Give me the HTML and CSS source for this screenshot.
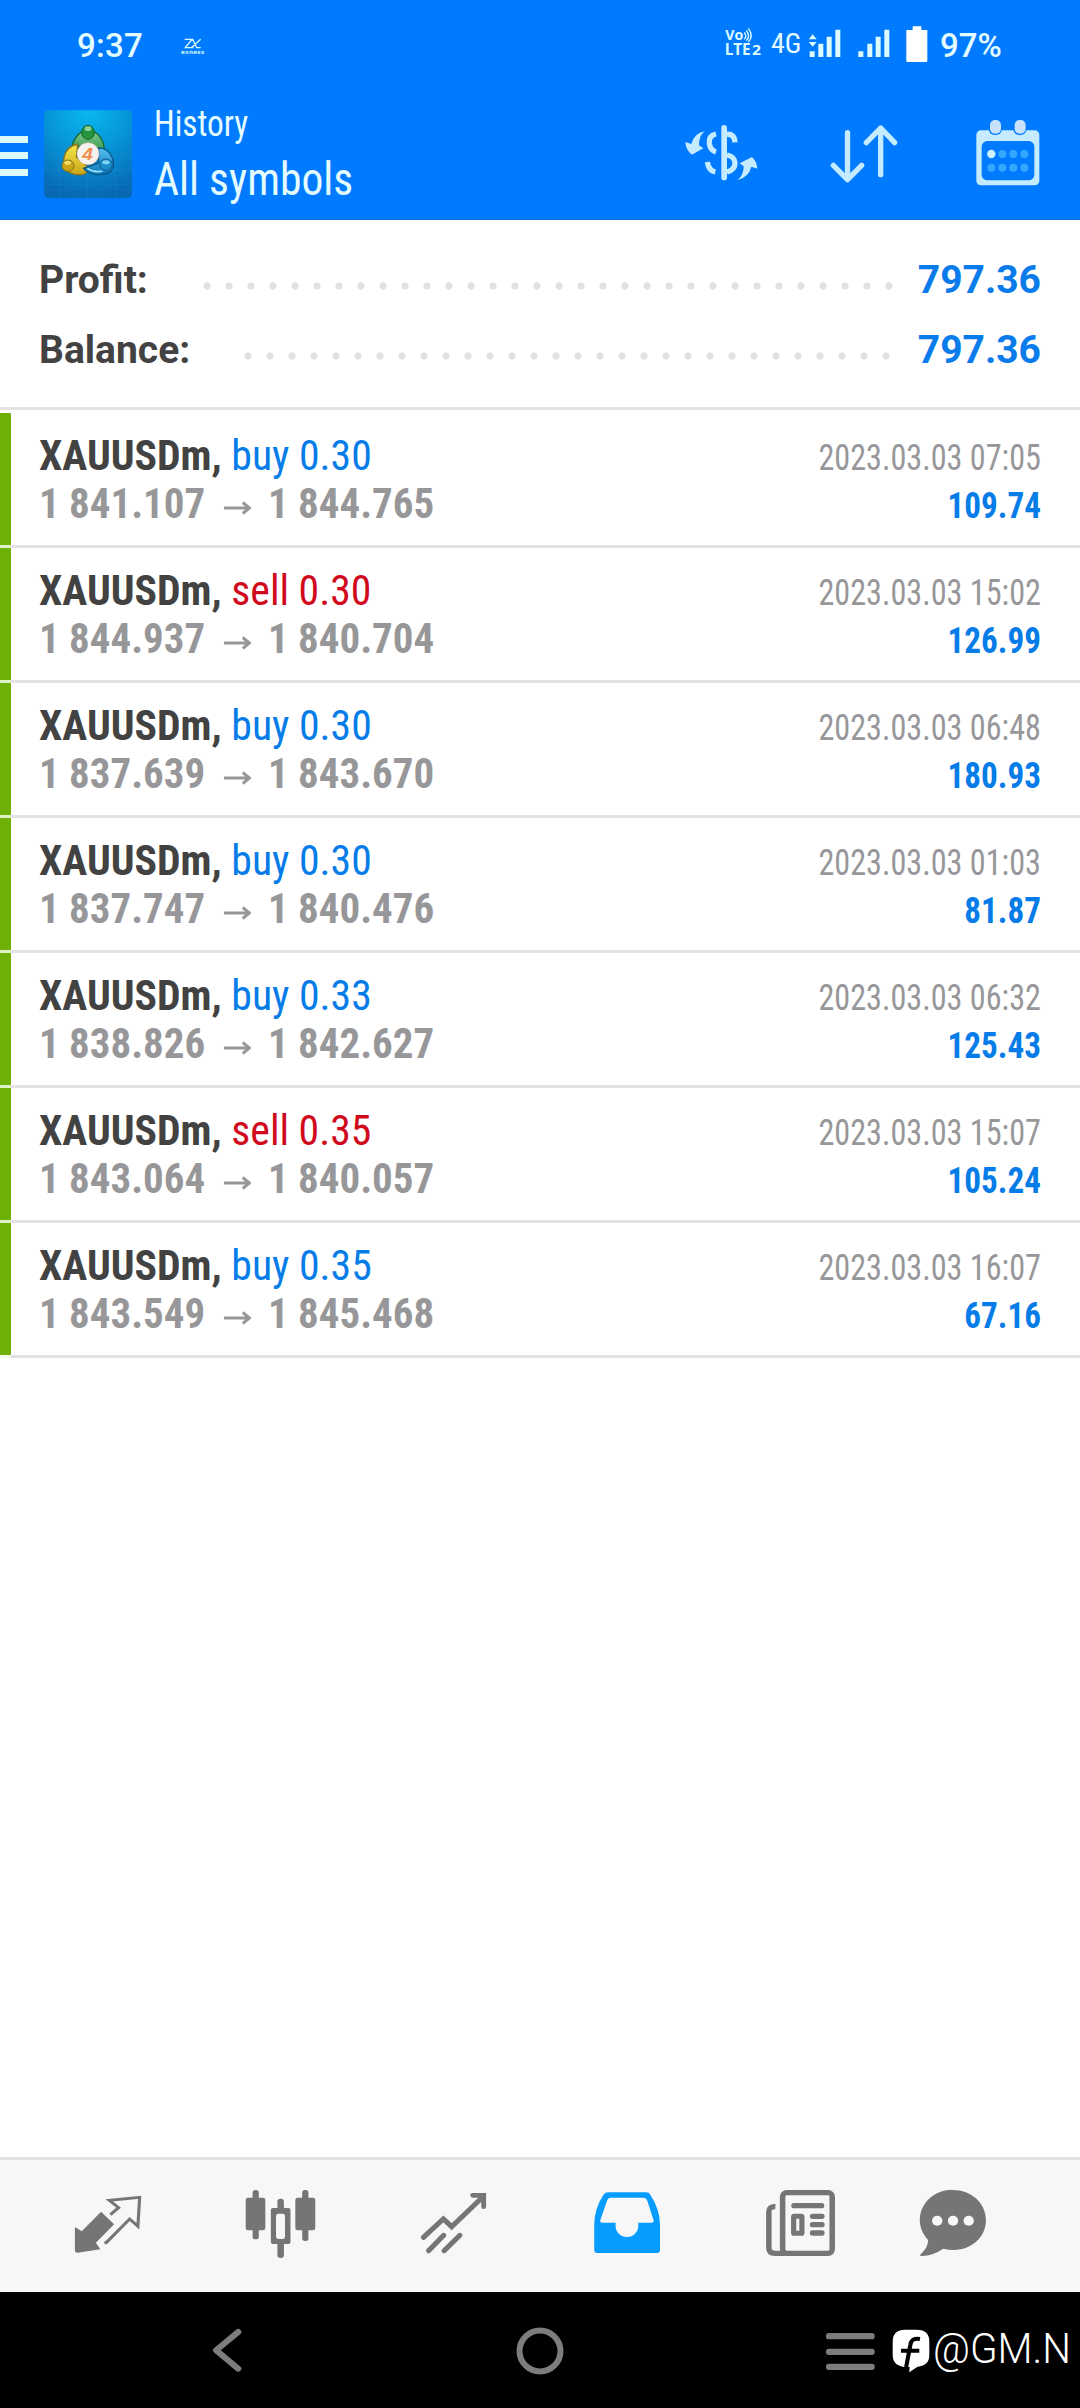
FILE: index.html
```html
<!DOCTYPE html>
<html lang="en">
<head>
<meta charset="utf-8">
<title>History</title>
<link rel="stylesheet" href="styles.css">
</head>
<body>
<div class="screen">
  <header class="top">
    <div class="status">
      <span class="clock">9:37</span>
      <svg class="exness" width="26" height="20" viewBox="0 0 78 60"><path d="M14 13h22L16 38h24M34 38L62 13M38 13l12 25h12" fill="none" stroke="#d8fbff" stroke-width="4"/><text class="tiny" x="3" y="57" textLength="70">exness</text></svg>
      <svg class="volte" width="40" height="34" viewBox="0 0 120 102"><text class="vo" x="4" y="42" textLength="54" lengthAdjust="spacingAndGlyphs">Vo</text><path d="M61 19q9 12 0 21M67 13q13 17 0 31M73 7q17 22 0 41" fill="none" stroke="#dcfbff" stroke-width="4"/><text class="vo lte" x="2" y="87" textLength="78" lengthAdjust="spacingAndGlyphs">LTE</text><text class="vo two" x="84" y="87" textLength="27" lengthAdjust="spacingAndGlyphs">2</text></svg>
      <span class="net cond">4G</span>
      <svg class="sig" width="84" height="32" viewBox="446 85 252 96" fill="#dcfbff"><path d="M451 119l12-15 12 15zM451 127h24l-12 14zM454 155h15v17h-15zM480 132h15v40h-15zM505 111h15v61h-15zM531 90h15v82h-15zM600 155h15v17h-15zM627 132h15v40h-15zM652 111h15v61h-15zM678 90h15v82h-15z"/></svg>
      <svg class="batt" width="22" height="36" viewBox="746 78 66 108" fill="#fff"><path d="M766 79h26v11h18v92q0 4-4 4h-55q-4 0-4-4V90h19z"/></svg>
      <span class="pct">97%</span>
    </div>
    <div class="appbar">
      <svg class="burger" width="28" height="42" viewBox="0 0 28 42" fill="#dcfbff"><path d="M0 1h28v7H0zM0 17h28v7H0zM0 34h28v7H0z"/></svg>
      <svg class="logo" width="88" height="88" viewBox="132 330 264 264">
        <defs>
          <radialGradient id="bg" cx=".5" cy="0" r="1"><stop offset="0" stop-color="#08b9f2"/><stop offset=".5" stop-color="#0792d6"/><stop offset="1" stop-color="#0868b4"/></radialGradient>
          <linearGradient id="gr" x1="0" y1="0" x2="0" y2="1"><stop offset="0" stop-color="#7fc98a"/><stop offset="1" stop-color="#1b8a3c"/></linearGradient>
          <linearGradient id="ye" x1="0" y1="0" x2="0" y2="1"><stop offset="0" stop-color="#f6e94a"/><stop offset="1" stop-color="#c9a51a"/></linearGradient>
          <linearGradient id="bl" x1="0" y1="0" x2="0" y2="1"><stop offset="0" stop-color="#56c0ee"/><stop offset="1" stop-color="#0a78b8"/></linearGradient>
        </defs>
        <rect x="132" y="331" width="264" height="263" rx="14" fill="url(#bg)"/>
        <path d="M179 331v263M221 331v263M263 331v263M305 331v263M347 331v263M132 378h264M132 422h264M132 466h264M132 510h264M132 553h264" stroke="#2fb2ea" stroke-opacity=".2" stroke-width="2" fill="none"/>
        <path d="M218 466q-7-36 13-58 14-17 33-17 22 0 35 18 19 25 12 57l-21 12-52-40z" fill="url(#gr)" stroke="#14692c" stroke-width="4"/>
        <ellipse cx="264" cy="397" rx="19" ry="21" fill="#26943f" stroke="#17632c" stroke-width="3"/><ellipse cx="264" cy="386" rx="10" ry="7" fill="#8fd09a"/>
        <path d="M233 432q-35 7-41 41-4 25 12 43 20 10 43 8 17-5 21-19l-39-33z" fill="url(#ye)" stroke="#8c741a" stroke-width="4"/>
        <ellipse cx="204" cy="497" rx="18" ry="17" fill="#c9a517" stroke="#8c741a" stroke-width="3"/><ellipse cx="203" cy="488" rx="10" ry="6" fill="#f0dd65"/>
        <path d="M296 443q31 3 41 31 9 25-6 41-22 14-48 8-22-4-32-18l45-16z" fill="url(#bl)" stroke="#0a568c" stroke-width="4"/>
        <path d="M262 505q20 14 45 8" stroke="#a3e1fa" stroke-width="5" fill="none"/>
        <ellipse cx="318" cy="494" rx="19" ry="17" fill="#1b8dca" stroke="#0a5d92" stroke-width="3"/><ellipse cx="318" cy="487" rx="11" ry="6" fill="#83d3f5"/>
        <circle cx="264" cy="461" r="33" fill="#f8f2ee" stroke="#cbbdb0" stroke-width="2"/>
        <text class="four" x="247" y="481" textLength="32" lengthAdjust="spacingAndGlyphs">4</text>
      </svg>
      <div class="titles cond"><div class="t1">History</div><div class="t2">All symbols</div></div>
      <svg class="act" width="80" height="72" viewBox="68 350 240 216" fill="#c4ebff">
        <path d="M78 425l18 6q8-32 40-38-17 13-17 42l13 9-34 19q-18-12-20-38zM294 505l-18-6q-8 32-41 40 18-14 18-41l-12-9 37-19q14 12 16 35z"/>
        <rect x="186" y="374" width="17" height="166" rx="8"/>
        <path d="M170 401q-23 5-20 29 3 20 20 25M144 485q4 26 24 30M203 402q22-2 24 24M203 464q24 5 24 25t-24 26" fill="none" stroke="#c4ebff" stroke-width="16"/>
      </svg>
      <svg class="act" width="70" height="72" viewBox="510 350 210 216" fill="none" stroke="#c4ebff" stroke-width="16" stroke-linecap="round" stroke-linejoin="round"><path d="M565.500 397v140M523 495l42.500 43L608 495M665 523V384M622 427l43-44 42 44"/></svg>
      <svg class="act" width="64" height="72" viewBox="950 350 192 216">
        <rect x="951" y="390" width="189" height="165" rx="14" fill="#c4ebff"/><rect x="967" y="422" width="158" height="118" rx="17" fill="#007bff"/>
        <rect x="988" y="356" width="40" height="48" rx="18" fill="#007bff"/><rect x="1062" y="356" width="40" height="48" rx="18" fill="#007bff"/>
        <rect x="992" y="359" width="33" height="41" rx="15" fill="#c8e2fb"/><rect x="1066" y="359" width="33" height="41" rx="15" fill="#c8e2fb"/>
        <circle cx="996" cy="461" r="12.500" fill="#c9f3ff"/><g fill="#33a8ff"><circle cx="1029" cy="461" r="12"/><circle cx="1062" cy="461" r="12"/><circle cx="1095" cy="461" r="12"/><circle cx="996" cy="502" r="12"/><circle cx="1029" cy="502" r="12"/><circle cx="1062" cy="502" r="12"/><circle cx="1095" cy="502" r="12"/></g>
      </svg>
    </div>
  </header>
  <section class="summary">
    <div class="sum"><span class="lbl">Profit:</span><i class="dots"></i><span class="val">797.36</span></div>
    <div class="sum bal"><span class="lbl">Balance:</span><i class="dots"></i><span class="val">797.36</span></div>
  </section>
  <main class="deals cond">
    <article class="deal"><div class="l"><div class="sym"><b>XAUUSDm,</b> <span class="buy">buy 0.30</span></div><div class="px"><span>1 841.107</span><svg class="arr" width="29" height="14" viewBox="0 0 29 14"><path d="M0 7h27M20 1.500L27 7l-7 5.500"/></svg><span>1 844.765</span></div></div><div class="r"><div class="dt">2023.03.03 07:05</div><div class="am">109.74</div></div></article>
    <article class="deal"><div class="l"><div class="sym"><b>XAUUSDm,</b> <span class="sell">sell 0.30</span></div><div class="px"><span>1 844.937</span><svg class="arr" width="29" height="14" viewBox="0 0 29 14"><path d="M0 7h27M20 1.500L27 7l-7 5.500"/></svg><span>1 840.704</span></div></div><div class="r"><div class="dt">2023.03.03 15:02</div><div class="am">126.99</div></div></article>
    <article class="deal"><div class="l"><div class="sym"><b>XAUUSDm,</b> <span class="buy">buy 0.30</span></div><div class="px"><span>1 837.639</span><svg class="arr" width="29" height="14" viewBox="0 0 29 14"><path d="M0 7h27M20 1.500L27 7l-7 5.500"/></svg><span>1 843.670</span></div></div><div class="r"><div class="dt">2023.03.03 06:48</div><div class="am">180.93</div></div></article>
    <article class="deal"><div class="l"><div class="sym"><b>XAUUSDm,</b> <span class="buy">buy 0.30</span></div><div class="px"><span>1 837.747</span><svg class="arr" width="29" height="14" viewBox="0 0 29 14"><path d="M0 7h27M20 1.500L27 7l-7 5.500"/></svg><span>1 840.476</span></div></div><div class="r"><div class="dt">2023.03.03 01:03</div><div class="am">81.87</div></div></article>
    <article class="deal"><div class="l"><div class="sym"><b>XAUUSDm,</b> <span class="buy">buy 0.33</span></div><div class="px"><span>1 838.826</span><svg class="arr" width="29" height="14" viewBox="0 0 29 14"><path d="M0 7h27M20 1.500L27 7l-7 5.500"/></svg><span>1 842.627</span></div></div><div class="r"><div class="dt">2023.03.03 06:32</div><div class="am">125.43</div></div></article>
    <article class="deal"><div class="l"><div class="sym"><b>XAUUSDm,</b> <span class="sell">sell 0.35</span></div><div class="px"><span>1 843.064</span><svg class="arr" width="29" height="14" viewBox="0 0 29 14"><path d="M0 7h27M20 1.500L27 7l-7 5.500"/></svg><span>1 840.057</span></div></div><div class="r"><div class="dt">2023.03.03 15:07</div><div class="am">105.24</div></div></article>
    <article class="deal"><div class="l"><div class="sym"><b>XAUUSDm,</b> <span class="buy">buy 0.35</span></div><div class="px"><span>1 843.549</span><svg class="arr" width="29" height="14" viewBox="0 0 29 14"><path d="M0 7h27M20 1.500L27 7l-7 5.500"/></svg><span>1 845.468</span></div></div><div class="r"><div class="dt">2023.03.03 16:07</div><div class="am">67.16</div></div></article>
  </main>
  <nav class="tabs">
    <svg preserveAspectRatio="none" viewBox="199 105 232.300 240"><path d="M219 231l20 13 56-59 38 38-53 55 13 20-66 10q-8 0-8-8z" fill="#757575"/><path d="M322 194l24-21-27-22 88-9-5 87-24-22-67 70-6 2" fill="none" stroke="#757575" stroke-width="9"/></svg>
    <svg preserveAspectRatio="none" viewBox="701.300 105 232.300 240" fill="#757575"><rect x="735" y="120" width="18" height="148" rx="8"/><rect x="715" y="143" width="57" height="98" rx="7"/><rect x="879" y="120" width="18" height="153" rx="8"/><rect x="859" y="143" width="58" height="98" rx="7"/><rect x="807" y="146" width="19" height="178" rx="9"/><rect x="788" y="174" width="57" height="108" rx="6"/><rect x="803" y="191" width="26" height="76" rx="7" fill="#f7f7f7"/></svg>
    <svg preserveAspectRatio="none" viewBox="1203.700 105 232.300 240" fill="none" stroke="#757575" stroke-width="15" stroke-linecap="round"><path d="M1231 262l58-55 24 23 88-87M1246 302l44-46M1291 302l46-46"/><path d="M1374 136h32v34" stroke-width="14"/></svg>
    <svg preserveAspectRatio="none" viewBox="138 105 232.300 240"><path fill-rule="evenodd" fill="#079cff" d="M200 127h110q8 0 12 7 28 45 28 90v75q0 10-10 10H170q-11 0-11-10v-75q0-48 27-90 5-7 14-7zM207 143q-7 0-10 7l-20 59q-3 9 6 9h38v10a33 33 0 0 0 66 0v-10h37q10 0 7-9l-18-57q-3-9-12-9z"/></svg>
    <svg preserveAspectRatio="none" viewBox="640.300 105 232.300 240" fill="none" stroke="#757575" stroke-width="16"><rect x="706" y="128" width="144" height="182" rx="12"/><path d="M685 170q-19-1-19 15v108q0 17 18 17h30"/><path d="M739 167h80M793 199h27M793 224h27M793 249h27" stroke-linecap="round"/><rect x="738" y="199" width="24" height="51" rx="2" stroke-width="15"/></svg>
    <svg preserveAspectRatio="none" viewBox="1083.200 105 232.300 240"><path d="M1199 120c53 0 96 38 96 91 0 51-43 89-93 89q-17 0-31-4-28 20-62 22-9 0-2-7 21-20 20-41c-14-15-24-36-24-59 0-53 43-92 96-92z" fill="#757575"/><g fill="#f7f7f7"><circle cx="1153.500" cy="212" r="15"/><circle cx="1199.500" cy="212" r="15"/><circle cx="1245" cy="212" r="15"/></g></svg>
  </nav>
  <footer class="sys">
    <svg class="back" preserveAspectRatio="none" width="30" height="44" viewBox="617 534 87 132" fill="none" stroke="#7d7d7d" stroke-width="18" stroke-linecap="round" stroke-linejoin="round"><path d="M693 546l-64 55 64 55"/></svg>
    <svg class="home" width="48" height="48" viewBox="0 0 48 48"><circle cx="24" cy="24" r="20.500" fill="none" stroke="#7d7d7d" stroke-width="6"/></svg>
    <svg class="recent" preserveAspectRatio="none" width="49" height="39" viewBox="830 546 142 117" fill="#7d7d7d"><rect x="830" y="549" width="141" height="19" rx="8"/><rect x="830" y="596" width="141" height="19" rx="8"/><rect x="830" y="641" width="141" height="19" rx="8"/></svg>
    <svg class="fb" preserveAspectRatio="none" width="38" height="44" viewBox="1022 538 110 132"><path d="M1060 540h34q36 0 36 36v40q0 32-34 35l-24 17 1-16q-49 3-49-36v-40q0-36 36-36z" fill="#fff"/><path d="M1103 568q-25-5-28 18l-12 66M1048 603h53" fill="none" stroke="#000" stroke-width="12"/></svg>
    <svg class="tag" width="144" height="60" viewBox="0 0 144 60"><text x="0" y="40.700" textLength="138" lengthAdjust="spacingAndGlyphs">@GM.N</text></svg>
  </footer>
</div>
</body>
</html>
```
FILE: styles.css
```css
* { box-sizing: border-box; }
body { margin: 0; background: #fff; font-family: Roboto, "Liberation Sans", sans-serif; color: #424242; }
.screen { display: flex; flex-direction: column; width: 1080px; height: 2408px; overflow: hidden; }
.cond { font-family: "Roboto Condensed", Roboto, sans-serif; font-stretch: 75%; }
.top { height: 220px; background: #007bff; border-bottom: 1px solid #0870d8; }
.status { display: flex; height: 90px; padding-top: 24px; color: #e4fcff; }
.status svg { flex: none; }
.clock { width: 102px; margin-left: 77px; font-size: 33px; line-height: 43px; font-weight: 500; letter-spacing: .3px; }
.exness { margin-top: 11px; margin-left: 1px; }
.tiny { font: 700 17px "DejaVu Sans", sans-serif; fill: #c8f2ff; }
.volte { margin: 2px 0 0 518px; overflow: visible; }
.vo { font: 700 40px "Open Sans", sans-serif; fill: #dcfbff; }
.lte { font-size: 47px; }
.two { font-size: 44px; }
.net { width: 36px; margin-left: 7px; font-size: 28px; line-height: 40px; }
.sig { margin: 4px 0 0 0; }
.batt { margin: 2px 0 0 15px; }
.pct { margin-left: 12px; font-size: 33px; line-height: 43px; font-weight: 500; }
.appbar { display: flex; height: 129px; color: #e4fcff; }
.appbar svg { flex: none; }
.burger { margin-top: 45px; }
.logo { margin: 20px 0 0 16px; }
.four { font: italic 700 50px "Liberation Sans", sans-serif; fill: #ef8f4d; }
.titles { width: 528px; margin-left: 22px; padding-top: 14px; white-space: nowrap; transform: scaleX(.927); transform-origin: 0 0; }
.t1 { font-size: 36px; line-height: 40px; }
.t2 { font-size: 47px; line-height: 70px; }
.act { margin-top: 27px; }
.act + .act { margin-left: 67px; }
.act + .act + .act { margin-left: 77px; }
.summary { height: 190px; padding: 25px 39px 0; border-bottom: 3px solid #e3e3e3; }
.sum { display: flex; height: 70px; line-height: 70px; font-size: 39px; font-weight: 700; }
.lbl { width: 157px; }
.dots { width: 704px; height: 22px; margin-top: 30px; background: radial-gradient(circle at center, #e1e1e1 3.200px, transparent 4px) 0 0 / 22px 22px; }
.bal .lbl { width: 198px; }
.bal .dots { width: 660px; }
.val { margin-left: auto; color: #0a7bea; }
.deals { flex: 1; padding-top: 3px; }
.deal {
  display: flex;
  justify-content: space-between;
  height: 135px;
  padding: 0 39px 0 39px;
  background:
    linear-gradient(#6fb006, #6fb006) 0 0 / 11px 132px no-repeat,
    linear-gradient(90deg, #dff2c4 11px, #e3e3e3 11px) 0 132px / 100% 3px no-repeat;
  white-space: nowrap;
}
.deal:last-child {
  background:
    linear-gradient(#6fb006, #6fb006) 0 0 / 11px 132px no-repeat,
    linear-gradient(90deg, #f4faea 11px, #e3e3e3 11px) 0 132px / 100% 3px no-repeat;
}
.l { padding-top: 18px; font-size: 43px; line-height: 48px; }
.sym { transform: scaleX(.97); transform-origin: 0 0; }
.px { display: flex; color: #979799; font-weight: 700; transform: scaleX(.952); transform-origin: 0 0; }
.arr { margin: 22px 18px 0 19px; fill: none; stroke: #979799; stroke-width: 3; }
.buy { color: #057ce8; }
.sell { color: #d00a1c; }
.r { padding-top: 21px; font-size: 36px; line-height: 48px; text-align: right; }
.dt { color: #979799; transform: scaleX(.894); transform-origin: 100% 0; }
.am { color: #057ce8; font-weight: 700; transform: scaleX(.92); transform-origin: 100% 0; }
.tabs { display: flex; gap: 93px; height: 135px; padding: 25px 0 0 68px; background: #f7f7f7; border-top: 3px solid #e3e3e3; }
.tabs svg { width: 80px; height: 80px; flex: none; }
.tabs svg:last-child { margin-left: -20.500px; }
.sys { display: flex; height: 116px; background: #000; }
.sys svg { flex: none; }
.back { margin: 36px 0 0 212px; }
.home { margin: 34.500px 0 0 274px; }
.recent { margin: 40px 0 0 262px; }
.fb { margin: 37px 0 0 16.500px; }
.tag { margin: 30px 0 0 3px; font-size: 42px; font-weight: 300; fill: #fff; }
```
